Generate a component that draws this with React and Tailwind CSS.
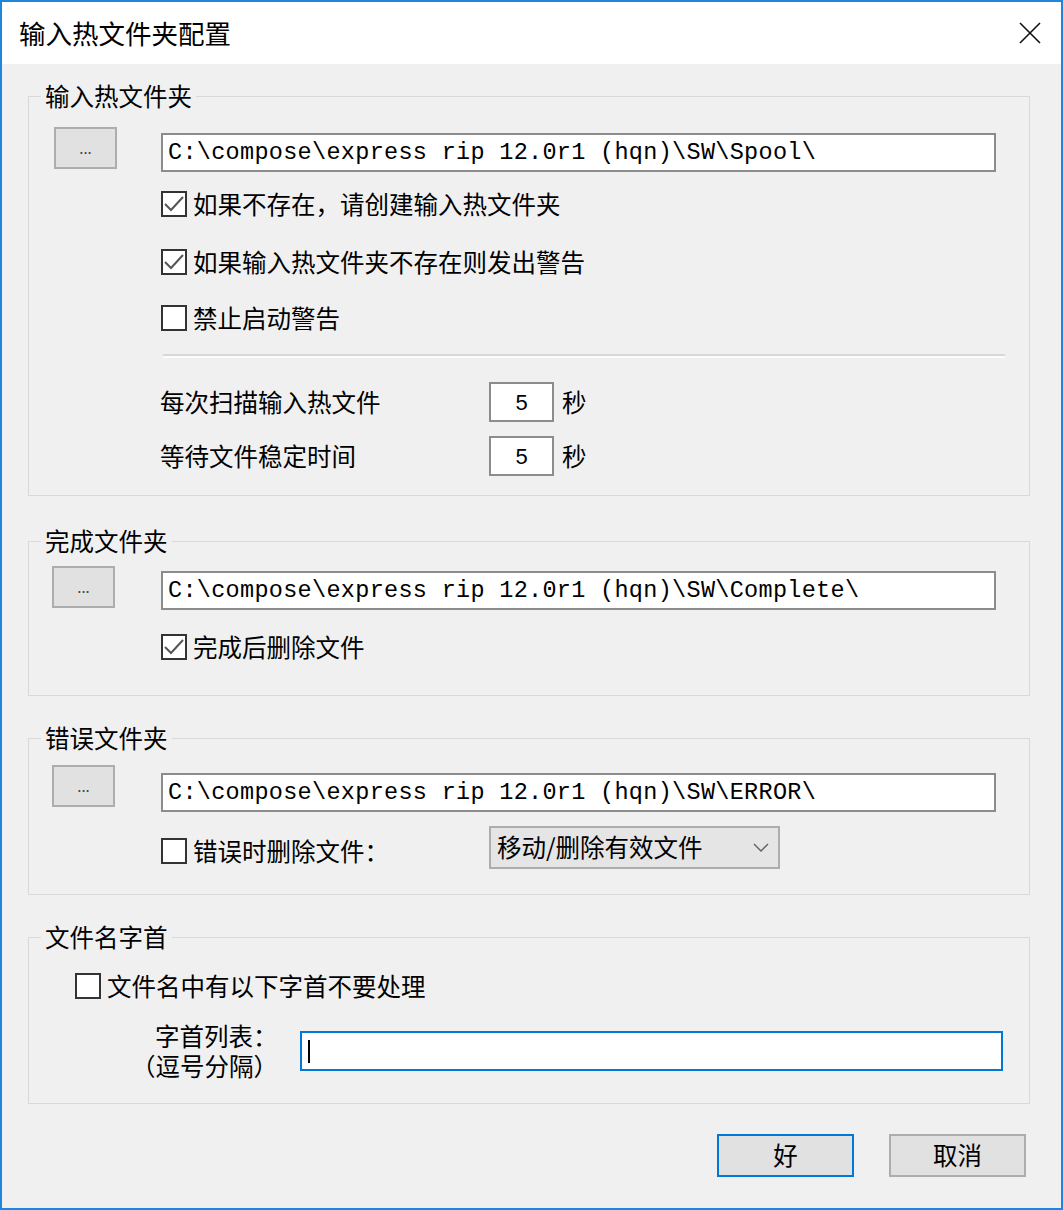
import React from 'react';

const cjk = { fontFamily: '"Noto Sans CJK SC", "Noto Sans", sans-serif' };

function CheckBox({ checked, label }) {
  return (
    <div className="flex items-center h-[30px]">
      <span className="w-[26px] h-[26px] border-2 border-[#333] bg-white flex items-center justify-center shrink-0">
        {checked && (
          <svg width="22" height="22" viewBox="0 0 22 22">
            <polyline points="2,11 8,17 20,4" fill="none" stroke="#555" strokeWidth="2" />
          </svg>
        )}
      </span>
      <span className="ml-[6px] whitespace-nowrap">{label}</span>
    </div>
  );
}

function DotsButton() {
  return (
    <button className="w-[63px] h-[42px] bg-[#e1e1e1] border-2 border-[#adadad] flex items-center justify-center text-[15px] text-[#444] shrink-0">
      ...
    </button>
  );
}

function PathBox({ value }) {
  return (
    <div
      className="w-[835px] h-[39px] bg-white border-2 border-[#8c8c8c] flex items-center pl-[5px] text-[23.5px] tracking-[0.3px] text-black whitespace-pre shrink-0"
      style={{ fontFamily: '"Liberation Mono", monospace' }}
    >
      {value}
    </div>
  );
}

function NumBox({ value }) {
  return (
    <div
      className="w-[65px] h-[40px] bg-white border-2 border-[#8c8c8c] flex items-center justify-center text-[22px]"
      style={{ fontFamily: '"Liberation Sans", sans-serif' }}
    >
      {value}
    </div>
  );
}

function Group({ title, className, children }) {
  return (
    <fieldset className={`ml-[26px] w-[1002px] border-[1.5px] border-[#d9d9d9] ${className}`}>
      <legend className="ml-[12px] px-[4px] leading-[30px]">{title}</legend>
      {children}
    </fieldset>
  );
}

export default function App() {
  return (
    <div
      className="w-[1063px] h-[1210px] border-2 border-[#1e86dc] flex flex-col text-[24.5px] text-black"
      style={cjk}
    >
      {/* 标题栏 */}
      <div className="h-[62px] bg-white flex items-center justify-between pl-[17px] pr-[20px] shrink-0">
        <span className="text-[26.5px]">输入热文件夹配置</span>
        <svg width="22" height="22" viewBox="0 0 22 22">
          <path d="M1 1 L21 21 M21 1 L1 21" stroke="#111" strokeWidth="1.6" fill="none" />
        </svg>
      </div>

      <div className="flex-1 bg-[#f0f0f0] flex flex-col">
        {/* 输入热文件夹 */}
        <Group title="输入热文件夹" className="mt-[17px] pt-[16px] pb-[19px]">
          <div className="flex items-start">
            <div className="ml-[25px]">
              <DotsButton />
            </div>
            <div className="ml-[44px] mt-[6px]">
              <PathBox value={'C:\\compose\\express rip 12.0r1 (hqn)\\SW\\Spool\\'} />
            </div>
          </div>
          <div className="pl-[132px] flex flex-col">
            <div className="mt-[17px]">
              <CheckBox checked label="如果不存在，请创建输入热文件夹" />
            </div>
            <div className="mt-[28px]">
              <CheckBox checked label="如果输入热文件夹不存在则发出警告" />
            </div>
            <div className="mt-[26px]">
              <CheckBox label="禁止启动警告" />
            </div>
          </div>
          <div className="ml-[134px] mt-[21px] w-[842px] h-[4px] bg-[#d8d8d8] border-b-2 border-[#fbfbfb]" />
          <div className="flex items-center mt-[24px] pl-[131px]">
            <span className="w-[329px]">每次扫描输入热文件</span>
            <NumBox value="5" />
            <span className="ml-[8px]">秒</span>
          </div>
          <div className="flex items-center mt-[14px] pl-[131px]">
            <span className="w-[329px]">等待文件稳定时间</span>
            <NumBox value="5" />
            <span className="ml-[8px]">秒</span>
          </div>
        </Group>

        {/* 完成文件夹 */}
        <Group title="完成文件夹" className="mt-[30px] pt-[10px] pb-[33px]">
          <div className="flex items-start">
            <div className="ml-[23px]">
              <DotsButton />
            </div>
            <div className="ml-[46px] mt-[5px]">
              <PathBox value={'C:\\compose\\express rip 12.0r1 (hqn)\\SW\\Complete\\'} />
            </div>
          </div>
          <div className="pl-[132px] mt-[22px]">
            <CheckBox checked label="完成后删除文件" />
          </div>
        </Group>

        {/* 错误文件夹 */}
        <Group title="错误文件夹" className="mt-[27px] pt-[12px] pb-[25px]">
          <div className="flex items-start">
            <div className="ml-[23px]">
              <DotsButton />
            </div>
            <div className="ml-[46px] mt-[8px]">
              <PathBox value={'C:\\compose\\express rip 12.0r1 (hqn)\\SW\\ERROR\\'} />
            </div>
          </div>
          <div className="flex items-start pl-[132px] mt-[14px]">
            <div className="w-[328px] mt-[10px]">
              <CheckBox label="错误时删除文件：" />
            </div>
            <div className="w-[291px] h-[43px] bg-[#e5e5e5] border-2 border-[#adadad] flex items-center justify-between pl-[6px] pr-[9px]">
              <span>移动/删除有效文件</span>
              <svg width="16" height="9" viewBox="0 0 16 9">
                <polyline points="1,1 8,8 15,1" fill="none" stroke="#606060" strokeWidth="1.4" />
              </svg>
            </div>
          </div>
        </Group>

        {/* 文件名字首 */}
        <Group title="文件名字首" className="mt-[27px] pt-[19px] pb-[22px]">
          <div className="pl-[46px]">
            <CheckBox label="文件名中有以下字首不要处理" />
          </div>
          <div className="flex items-start mt-[20px]">
            <div className="w-[271px] flex flex-col whitespace-nowrap">
              <div className="h-[30px] leading-[30px] pl-[126px]">字首列表：</div>
              <div className="h-[30px] leading-[30px] pl-[102px] flex">
                <span className="w-[24.5px]">（</span>
                <span>逗号分隔</span>
                <span className="w-[24.5px]">）</span>
              </div>
            </div>
            <div className="mt-[10px] w-[703px] h-[40px] bg-white border-2 border-[#0078d7] flex items-center pl-[6px]">
              <span className="w-[1.5px] h-[23px] bg-black" />
            </div>
          </div>
        </Group>

        {/* 按钮 */}
        <div className="flex justify-end gap-[35px] mt-[30px] pr-[35px]">
          <button className="w-[137px] h-[43px] bg-[#e1e1e1] border-2 border-[#0078d7] flex items-center justify-center">
            好
          </button>
          <button className="w-[137px] h-[43px] bg-[#e1e1e1] border-2 border-[#adadad] flex items-center justify-center">
            取消
          </button>
        </div>
      </div>
    </div>
  );
}
